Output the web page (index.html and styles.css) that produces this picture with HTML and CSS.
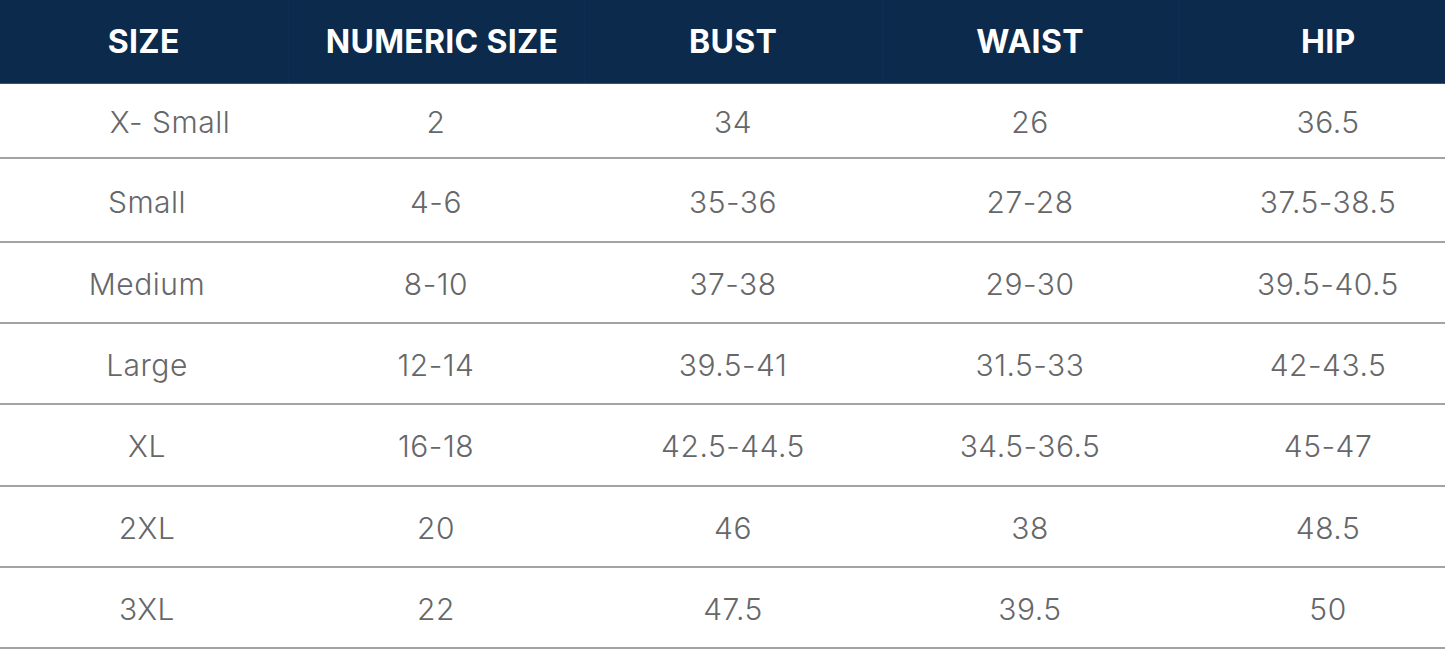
FILE: index.html
```html
<!DOCTYPE html>
<html lang="en">
<head>
<meta charset="utf-8">
<title>Size Chart</title>
<link rel="stylesheet" href="styles.css">
</head>
<body>
<table class="chart">
  <colgroup>
    <col class="c1"><col class="c2"><col class="c3"><col class="c4"><col class="c5">
  </colgroup>
  <thead>
    <tr class="head">
      <th>SIZE</th><th class="num">NUMERIC SIZE</th><th>BUST</th><th>WAIST</th><th>HIP</th>
    </tr>
  </thead>
  <tbody>
    <tr class="r1"><td class="sz xs">X- Small</td><td>2</td><td>34</td><td>26</td><td>36.5</td></tr>
    <tr class="r2"><td class="sz">Small</td><td>4-6</td><td>35-36</td><td>27-28</td><td>37.5-38.5</td></tr>
    <tr class="rn"><td class="sz">Medium</td><td>8-10</td><td>37-38</td><td>29-30</td><td>39.5-40.5</td></tr>
    <tr class="rn"><td class="sz">Large</td><td>12-14</td><td>39.5-41</td><td>31.5-33</td><td>42-43.5</td></tr>
    <tr class="rn"><td class="sz">XL</td><td>16-18</td><td>42.5-44.5</td><td>34.5-36.5</td><td>45-47</td></tr>
    <tr class="rn"><td class="sz">2XL</td><td>20</td><td>46</td><td>38</td><td>48.5</td></tr>
    <tr class="rn"><td class="sz">3XL</td><td>22</td><td>47.5</td><td>39.5</td><td>50</td></tr>
  </tbody>
</table>
</body>
</html>
```
FILE: styles.css
```css
html, body {
  margin: 0;
  padding: 0;
  background: #ffffff;
  overflow: hidden;
}
.chart {
  width: 1478px;
  table-layout: fixed;
  border-collapse: collapse;
  border-spacing: 0;
}
.c1 { width: 288px; }
.c2 { width: 296px; }
.c3 { width: 298px; }
.c4 { width: 296px; }
.c5 { width: 300px; }

.head th {
  height: 83px;
  padding: 0;
  background: #0c2a4b;
  color: #ffffff;
  font-family: Inter, "Liberation Sans", sans-serif;
  font-weight: 700;
  font-size: 32px;
  letter-spacing: 0.3px;
  text-align: center;
  vertical-align: middle;
  border-left: 1px solid #0f2f52;
  border-bottom: 1px solid #4a4f56;
}
.head th:first-child { border-left: none; }
.head .num { padding-left: 12px; }

.chart td {
  padding: 3px 0 0 0;
  text-align: center;
  vertical-align: middle;
  font-family: Inter, "Liberation Sans", sans-serif;
  font-weight: 300;
  font-size: 30px;
  letter-spacing: 0.5px;
  color: #666769;
  border-bottom: 2px solid #a3a3a3;
}
.r1 td { height: 70px; }
.r2 td { height: 79px; }
.rn td { height: 76.2px; }
.sz { padding-left: 6px !important; }
.xs { padding-left: 52px !important; }
```
